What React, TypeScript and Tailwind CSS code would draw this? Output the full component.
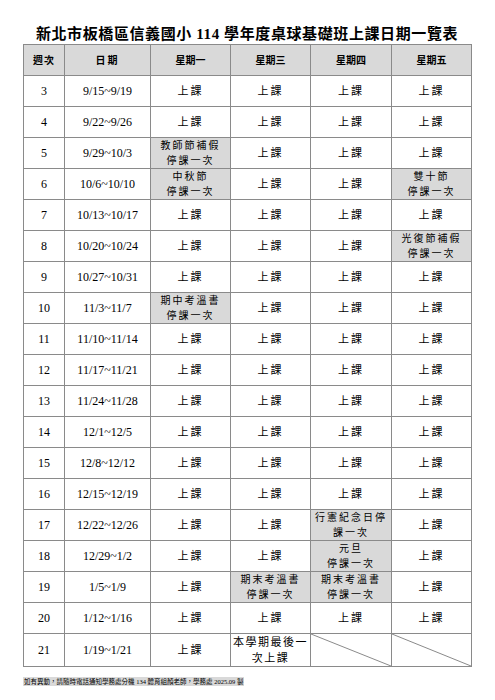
type Cell = string | { text: string[]; gray?: boolean; big?: boolean } | null

const rows: { wk: string; date: string; days: Cell[] }[] = [
  { wk: "3", date: "9/15~9/19", days: ["上課", "上課", "上課", "上課"] },
  { wk: "4", date: "9/22~9/26", days: ["上課", "上課", "上課", "上課"] },
  { wk: "5", date: "9/29~10/3", days: [{ text: ["教師節補假", "停課一次"], gray: true }, "上課", "上課", "上課"] },
  {
    wk: "6",
    date: "10/6~10/10",
    days: [{ text: ["中秋節", "停課一次"], gray: true }, "上課", "上課", { text: ["雙十節", "停課一次"], gray: true }],
  },
  { wk: "7", date: "10/13~10/17", days: ["上課", "上課", "上課", "上課"] },
  { wk: "8", date: "10/20~10/24", days: ["上課", "上課", "上課", { text: ["光復節補假", "停課一次"], gray: true }] },
  { wk: "9", date: "10/27~10/31", days: ["上課", "上課", "上課", "上課"] },
  { wk: "10", date: "11/3~11/7", days: [{ text: ["期中考溫書", "停課一次"], gray: true }, "上課", "上課", "上課"] },
  { wk: "11", date: "11/10~11/14", days: ["上課", "上課", "上課", "上課"] },
  { wk: "12", date: "11/17~11/21", days: ["上課", "上課", "上課", "上課"] },
  { wk: "13", date: "11/24~11/28", days: ["上課", "上課", "上課", "上課"] },
  { wk: "14", date: "12/1~12/5", days: ["上課", "上課", "上課", "上課"] },
  { wk: "15", date: "12/8~12/12", days: ["上課", "上課", "上課", "上課"] },
  { wk: "16", date: "12/15~12/19", days: ["上課", "上課", "上課", "上課"] },
  { wk: "17", date: "12/22~12/26", days: ["上課", "上課", { text: ["行憲紀念日停", "課一次"], gray: true }, "上課"] },
  { wk: "18", date: "12/29~1/2", days: ["上課", "上課", { text: ["元旦", "停課一次"], gray: true }, "上課"] },
  {
    wk: "19",
    date: "1/5~1/9",
    days: ["上課", { text: ["期末考溫書", "停課一次"], gray: true }, { text: ["期末考溫書", "停課一次"], gray: true }, "上課"],
  },
  { wk: "20", date: "1/12~1/16", days: ["上課", "上課", "上課", "上課"] },
  { wk: "21", date: "1/19~1/21", days: ["上課", { text: ["本學期最後一", "次上課"], big: true }, null, null] },
]

const td = "border border-[#8a8a8a] text-center align-middle p-0"

function DayCell({ cell }: { cell: Cell }) {
  if (cell === null) {
    return (
      <td className={`${td} relative`}>
        <svg className="absolute inset-0 h-full w-full" viewBox="0 0 100 100" preserveAspectRatio="none">
          <line x1="0" y1="0" x2="100" y2="100" stroke="#8a8a8a" strokeWidth="1" vectorEffect="non-scaling-stroke" />
        </svg>
      </td>
    )
  }
  if (typeof cell === "string") {
    return <td className={`${td} text-[11px] tracking-[2px]`}>{cell}</td>
  }
  return (
    <td className={`${td} ${cell.gray ? "bg-[#d9d9d9]" : ""}`}>
      <div className={`${cell.big ? "text-[11px] tracking-[1.5px] leading-[16px]" : "text-[10px] tracking-[2px] leading-[15px]"}`}>
        {cell.text.map((t) => (
          <div key={t}>{t}</div>
        ))}
      </div>
    </td>
  )
}

export default function App() {
  return (
    <div className="w-[495px] h-[700px] bg-white text-black font-['Liberation_Serif','Noto_Sans_CJK_TC',serif]">
      <div className="pt-[24px] pl-[23px] w-[471px]">
        <h1 className="text-center text-[15px] font-bold leading-[20px] tracking-[0.6px] whitespace-nowrap">
          新北市板橋區信義國小 114 學年度桌球基礎班上課日期一覽表
        </h1>
        <table className="table-fixed border-collapse w-[448px]">
          <colgroup>
            <col className="w-[41px]" />
            <col className="w-[86px]" />
            <col className="w-[80px]" />
            <col className="w-[80px]" />
            <col className="w-[81px]" />
            <col className="w-[80px]" />
          </colgroup>
          <thead>
            <tr className="h-[31px] bg-[#d9d9d9]">
              <th className={`${td} text-[10px] font-bold tracking-[1px]`}>週次</th>
              <th className={`${td} text-[10px] font-bold tracking-[2px]`}>日期</th>
              <th className={`${td} text-[10px] font-bold`}>星期一</th>
              <th className={`${td} text-[10px] font-bold`}>星期三</th>
              <th className={`${td} text-[10px] font-bold`}>星期四</th>
              <th className={`${td} text-[10px] font-bold`}>星期五</th>
            </tr>
          </thead>
          <tbody>
            {rows.map((r) => (
              <tr key={r.wk} className="h-[31px]">
                <td className={`${td} text-[12px]`}>{r.wk}</td>
                <td className={`${td} text-[12px]`}>{r.date}</td>
                {r.days.map((d, i) => (
                  <DayCell key={i} cell={d} />
                ))}
              </tr>
            ))}
          </tbody>
        </table>
        <div>
          <span className="bg-[#d9d9d9] text-[6.5px] leading-[9px] inline-block px-[1px] whitespace-nowrap">
            如有異動，請隨時電話通知學務處分機 134 體育組顏老師，學務處 2025.09 製
          </span>
        </div>
      </div>
    </div>
  )
}
